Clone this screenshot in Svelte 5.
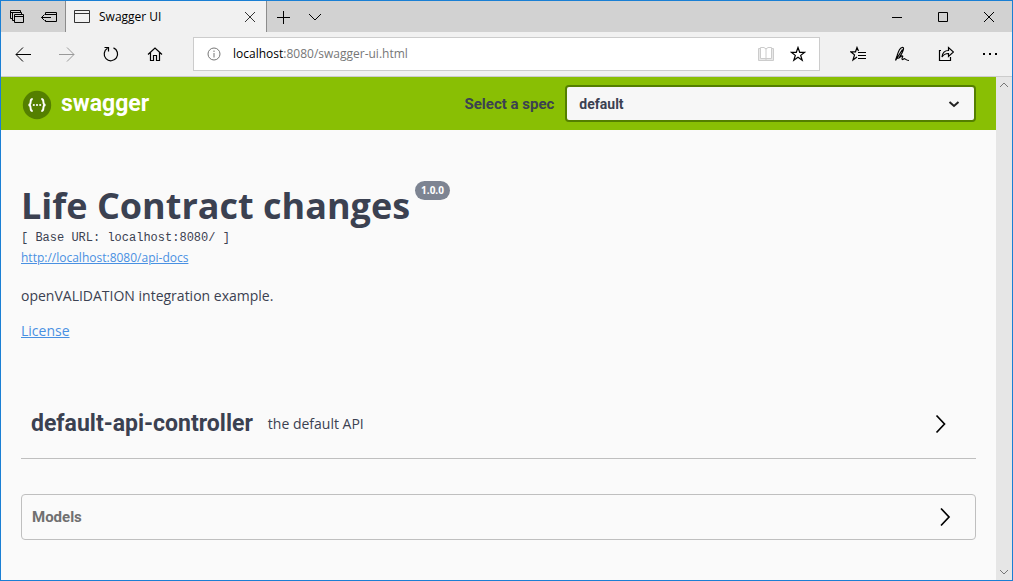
<script>
  let spec = $state('default');
  let address = $state('localhost:8080/swagger-ui.html');
  let host = $derived(address.split(':')[0]);
  let rest = $derived(address.slice(host.length));
</script>

<div class="window">
  <header class="tabstrip">
    <button class="small" aria-label="Tabs you've set aside">
      <svg width="16" height="16" viewBox="0 0 16 16"><path d="M3.500 9.500H1.500V1.500H11.500V3.500M2 3.500H10M5 11.500H3.500V3.500H12.500V5.500M5.500 5.500H14.500V13.500H5.500ZM5.500 7.500H14.500" /></svg>
    </button>
    <button class="small" aria-label="Set these tabs aside">
      <svg width="18" height="16" viewBox="0 0 18 16"><path d="M5.500 6V3.500H16.500V12.500H5.500V11M5.500 5.500H16M1.500 8.500H11M4.500 5.500L1.500 8.500L4.500 11.500" /></svg>
    </button>
    <div class="tab">
      <svg width="16" height="16" viewBox="0 0 16 16"><path d="M.5 1.500H15.500V13.500H.5ZM.5 4.500H15.500" /></svg>
      <span>Swagger UI</span>
      <button class="close" aria-label="Close tab">
        <svg width="12" height="12" viewBox="0 0 12 12"><path d="M1 1L11 11M11 1L1 11" /></svg>
      </button>
    </div>
    <button class="small" aria-label="New tab">
      <svg width="14" height="14" viewBox="0 0 14 14"><path d="M7.500 1V14M1 7.500H14" /></svg>
    </button>
    <button class="small" aria-label="Show tab previews">
      <svg width="14" height="14" viewBox="0 0 14 14"><path d="M1 4L7 10L13 4" /></svg>
    </button>
    <div class="spacer"></div>
    <button class="caption" aria-label="Minimize">
      <svg width="12" height="12" viewBox="0 0 12 12"><path d="M1 6.500H11" /></svg>
    </button>
    <button class="caption" aria-label="Maximize">
      <svg width="12" height="12" viewBox="0 0 12 12"><path d="M1.500 1.500H10.500V10.500H1.500Z" /></svg>
    </button>
    <button class="caption" aria-label="Close">
      <svg width="12" height="12" viewBox="0 0 12 12"><path d="M1 1L11 11M11 1L1 11" /></svg>
    </button>
  </header>

  <nav class="toolbar">
    <button aria-label="Back">
      <svg width="16" height="16" viewBox="0 0 16 16"><path d="M1 8.500H16M8 1.500L1 8.500L8 15.500" /></svg>
    </button>
    <button class="disabled" aria-label="Forward" disabled>
      <svg width="16" height="16" viewBox="0 0 16 16"><path d="M0 8.500H15M8 1.500L15 8.500L8 15.500" /></svg>
    </button>
    <button aria-label="Refresh">
      <svg width="16" height="16" viewBox="0 0 16 16"><path stroke-width="1.200" d="M10.500 1.900A6.700 6.700 0 1 1 4.500 2.300M1.500 1.500H5.500V5.500" /></svg>
    </button>
    <button aria-label="Home">
      <svg width="16" height="16" viewBox="0 0 16 16"><path stroke-width="1.200" d="M1 8.500L8 2L15 8.500M3.500 6.500V14.500H6.500V9.500H9.500V14.500H12.500V6.500" /></svg>
    </button>
    <div class="address">
      <svg class="info" width="14" height="14" viewBox="0 0 14 14"><circle cx="7" cy="7" r="6" /><path d="M7 6V10.500M7 3.500V5" /></svg>
      <label class="url">
        <span class="shown" aria-hidden="true">{host}<i>{rest}</i></span>
        <input aria-label="Address" bind:value={address} />
      </label>
      <button class="book" aria-label="Reading view" disabled>
        <svg width="18" height="16" viewBox="0 0 18 16"><path fill="#e8e8e8" d="M1.500 2.500H16.500V14.500H1.500Z" /><path fill="#fff" d="M3.500 12.500V1.500H7L9 3L11 1.500H14.500V12.500ZM9 3V14" /></svg>
      </button>
      <button class="fav" aria-label="Add to favorites">
        <svg width="16" height="16" viewBox="0 0 16 16"><path stroke-width="1.200" d="M8 1.500L9.700 6.300H14.700L10.700 9.400L12.200 14.300L8 11.300L3.800 14.300L5.300 9.400L1.300 6.300H6.300Z" /></svg>
      </button>
    </div>
    <button aria-label="Favorites">
      <svg width="16" height="16" viewBox="0 0 16 16"><path stroke-width="1.200" d="M8.500 5L7 1.500L5.500 5.800H.8L4.500 8.900L3 14L7 11M8 6.500H16M8 9.500H16M8 12.500H16" /></svg>
    </button>
    <button aria-label="Add notes">
      <svg width="16" height="16" viewBox="0 0 16 16"><path stroke-width="1.200" d="M1.500 14.500L3 10C4 6.500 6 2 8 1.500C10.500 1 9.500 4 8 7L5 12L2.500 12.500M1.500 14.500L8.500 3.500M5 12C7 9.500 9.500 9 8.500 11C7.500 13 8 14.500 10 12.800C11 12 11.500 14.500 15 14.500" /></svg>
    </button>
    <button aria-label="Share">
      <svg width="16" height="16" viewBox="0 0 16 16"><path stroke-width="1.200" d="M3 4.500H1.500V14.500H12.500V11M4 11C4.500 6.500 7 4.500 10.500 4.500V1.500L15.500 6L10.500 10.500V7.500C7.500 7.500 5.500 8.500 4 11Z" /></svg>
    </button>
    <button aria-label="Settings and more">
      <svg width="16" height="16" viewBox="0 0 16 16"><path stroke-width="2" d="M1 8H3M7 8H9M13 8H15" /></svg>
    </button>
  </nav>

  <div class="viewport">
    <div class="page">
      <div class="topbar">
        <a class="brand" href="#top">
          <svg width="32" height="32" viewBox="-1 -2 32 32">
            <circle cx="15" cy="15" r="14.200" fill="#547f00" stroke="none" />
            <path d="M10.700 9C8.600 9 8.600 10.200 8.600 12C8.600 14 8.200 14.900 6.500 15C8.200 15.100 8.600 16 8.600 18C8.600 19.800 8.600 21 10.700 21M19.300 9C21.400 9 21.400 10.200 21.400 12C21.400 14 21.800 14.900 23.500 15C21.800 15.100 21.400 16 21.400 18C21.400 19.800 21.400 21 19.300 21" stroke="#fff" stroke-width="1.900" />
            <g fill="#fff" stroke="none"><circle cx="11.800" cy="15" r="1.100" /><circle cx="15" cy="15" r="1.100" /><circle cx="18.200" cy="15" r="1.100" /></g>
          </svg>
          <span>swagger</span>
        </a>
        <label for="spec">Select a spec</label>
        <div class="select">
          <select id="spec" bind:value={spec}>
            <option value="default">default</option>
          </select>
          <svg width="12" height="12" viewBox="0 0 12 12"><path stroke="#222" stroke-width="2" d="M1.500 4L6 8L10.500 4" /></svg>
        </div>
      </div>

      <main>
        <section class="info-block">
          <h1>Life Contract changes <small>1.0.0</small></h1>
          <pre>[ Base URL: localhost:8080/ ]</pre>
          <a class="docs" href="#api-docs">http://localhost:8080/api-docs</a>
          <p>openVALIDATION integration example.</p>
          <a class="license" href="#license">License</a>
        </section>

        <button class="tag">
          <strong>default-api-controller</strong>
          <span>the default API</span>
          <svg width="20" height="20" viewBox="0 0 20 20"><path stroke-width="1.700" d="M5.500 1.500L13.500 10L5.500 18.500" /></svg>
        </button>

        <button class="models">
          <strong>Models</strong>
          <svg width="20" height="20" viewBox="0 0 20 20"><path stroke-width="1.700" d="M6 1.500L14 10L6 18.500" /></svg>
        </button>
      </main>
    </div>
    <div class="scrollbar">
      <svg width="16" height="16" viewBox="0 0 16 16"><path d="M4 10L8 6L12 10" /></svg>
      <svg width="16" height="16" viewBox="0 0 16 16"><path d="M4 6L8 10L12 6" /></svg>
    </div>
  </div>
</div>

<style>
  :global(body) { margin: 0; }
  * { box-sizing: border-box; }
  .window {
    min-height: 100vh;
    display: flex;
    flex-direction: column;
    border: 1px solid #1a7fd4;
    background: #fafafa;
    color: #3b4151;
    font-family: "Open Sans", sans-serif;
  }
  svg { fill: none; stroke: currentColor; flex: none; display: block; }
  button {
    border: 0;
    margin: 0;
    padding: 0;
    background: none;
    color: #000;
    font-family: inherit;
    display: flex;
    align-items: center;
    justify-content: center;
  }
  .tabstrip { display: flex; height: 31px; background: #d2d2d2; }
  .small { width: 32px; }
  .caption { width: 46px; }
  .spacer { flex: 1; }
  .tab {
    display: flex;
    align-items: center;
    gap: 9px;
    width: 202px;
    padding: 0 10px 0 8px;
    border: solid #8c8c8c;
    border-width: 0 1px;
    background: #f1f1f1;
    color: #000;
    font-size: 12px;
  }
  .tab svg { color: #333; }
  .close { margin-left: auto; }

  .toolbar {
    display: flex;
    height: 45px;
    background: #f1f1f1;
    border-bottom: 1px solid #ccc;
  }
  .toolbar > button { width: 44px; }
  .toolbar .disabled { color: #999; }
  .address {
    flex: 1;
    display: flex;
    align-items: center;
    margin: 5px 16px;
    padding-left: 13px;
    padding-right: 5px;
    background: #fff;
    border: 1px solid #ccc;
  }
  .info { color: #777; }
  .url { flex: 1; display: grid; margin-left: 12px; font-size: 12px; }
  .shown, .url input { grid-area: 1 / 1; line-height: 20px; }
  .shown { color: #000; }
  .shown i { font-style: normal; color: #777; }
  .url input {
    border: 0;
    padding: 0;
    outline: 0;
    background: none;
    color: transparent;
    caret-color: #000;
    font-family: inherit;
    font-size: 12px;
    width: 100%;
  }
  .address button { width: 32px; }
  .address .book { color: #ccc; }

  .viewport { flex: 1; display: flex; }
  .page { flex: 1; min-width: 0; }
  .scrollbar {
    width: 16px;
    display: flex;
    flex-direction: column;
    justify-content: space-between;
    background: #e6e6e6;
    color: #777;
  }
  .topbar {
    display: flex;
    align-items: center;
    padding: 8px 20px;
    background: #89bf04;
    font-family: Roboto, sans-serif;
    font-weight: 700;
  }
  .brand {
    flex: 1;
    display: flex;
    align-items: center;
    gap: 8px;
    color: #fff;
    font-size: 23px;
    text-decoration: none;
  }
  .topbar label { font-size: 15px; margin-right: 11px; }
  .select { display: grid; align-items: center; width: 43%; }
  .select > * { grid-area: 1 / 1; }
  .select svg { justify-self: end; margin-right: 16px; pointer-events: none; }
  select {
    appearance: none;
    height: 37px;
    padding: 0 12px;
    border: 2px solid #547f00;
    border-radius: 4px;
    background: #f7f7f7;
    color: #3b4151;
    font-family: Roboto, sans-serif;
    font-size: 14px;
    font-weight: 700;
  }

  main { padding: 51px 20px 32px; }
  .info-block { display: flex; flex-direction: column; align-items: flex-start; }
  h1 {
    display: flex;
    align-items: flex-start;
    gap: 5px;
    margin: 0;
    font-size: 36px;
    line-height: 50px;
  }
  small {
    padding: 0 6px;
    border-radius: 10px;
    background: #7d8492;
    color: #fff;
    font-size: 10px;
    line-height: 19px;
  }
  pre {
    margin: 0;
    font-family: "Liberation Mono", monospace;
    font-size: 12px;
    line-height: 14px;
  }
  .info-block a { color: #4990e2; }
  .docs { margin-top: 4px; font-size: 12px; line-height: 18px; }
  p { margin: 19px 0 15px; font-size: 14px; line-height: 20px; }
  .license { font-size: 14px; line-height: 20px; }
  .tag {
    width: 100%;
    justify-content: flex-start;
    gap: 15px;
    height: 66px;
    margin-top: 52px;
    padding: 0 25px 4px 10px;
    border-bottom: 1px solid #bfbfbf;
    color: #3b4151;
    font-size: 14px;
  }
  .tag strong { font-family: Roboto, sans-serif; font-size: 23px; }
  .tag svg, .models svg { margin-left: auto; color: #000; }
  .models {
    width: 100%;
    height: 46px;
    margin-top: 35px;
    padding: 0 20px 0 10px;
    border: 1px solid #bfbfbf;
    border-radius: 4px;
    color: #707070;
  }
  .models strong { font-family: Roboto, sans-serif; font-size: 15px; }
</style>
